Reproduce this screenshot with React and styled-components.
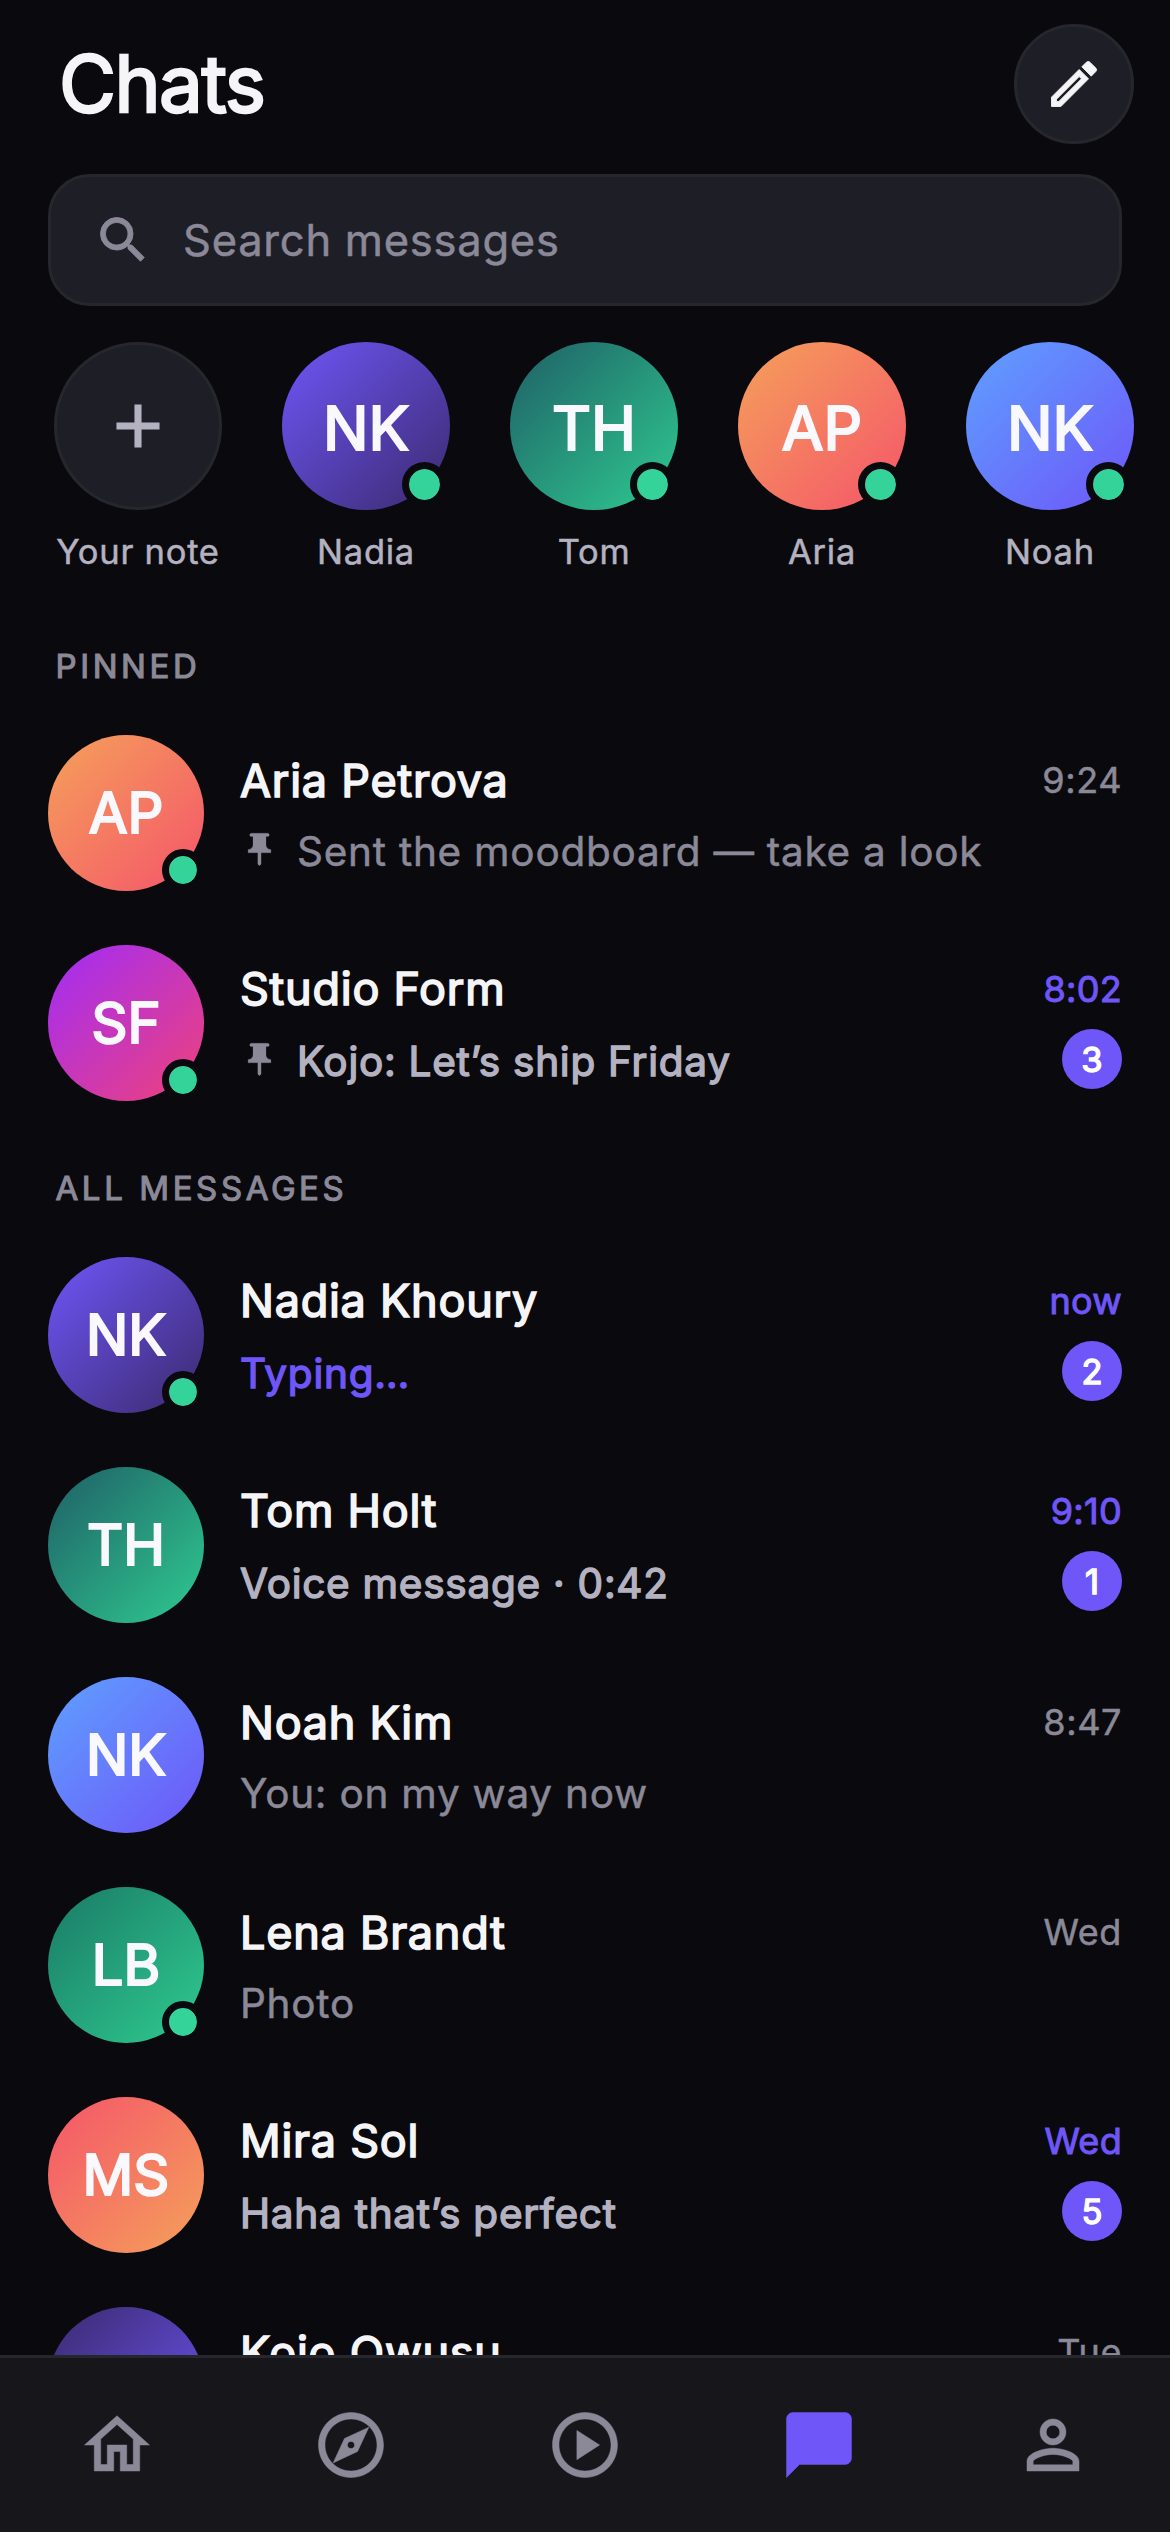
import React from 'react';
import styled, { createGlobalStyle } from 'styled-components';
import {
  MdAdd,
  MdChatBubble,
  MdOutlineEdit,
  MdOutlineExplore,
  MdOutlineHome,
  MdOutlinePlayCircle,
  MdPersonOutline,
  MdPushPin,
  MdSearch,
} from 'react-icons/md';

const COLORS = {
  background: '#0a0a0e',
  surface: '#1e1e26',
  nav: '#16161b',
  border: '#26262d',
  text: '#f5f5f8',
  soft: '#b4b2c0',
  muted: '#8b8998',
  accent: '#6e56f8',
  online: '#34d399',
};

const GRADIENTS = {
  violet: ['#6e56f8', '#3b2a6e'],
  teal: ['#1f5f66', '#2fcb90'],
  sunset: ['#f5a05a', '#f4556a'],
  sky: ['#5ea0ff', '#6e56f8'],
  magenta: ['#a02cf8', '#f0427a'],
  green: ['#1a7a66', '#2fcb90'],
  coral: ['#f4556a', '#f5a05a'],
  dusk: ['#3b2a6e', '#6e56f8'],
};

const GlobalStyle = createGlobalStyle`
  * {
    box-sizing: border-box;
  }

  body {
    margin: 0;
    background: ${COLORS.background};
    color: ${COLORS.text};
    font-family: Inter, 'Liberation Sans', sans-serif;
    font-weight: 400;
    -webkit-text-stroke: 0.5px currentColor;
  }

  /* the icons carry an empty 24x24 box that must not be outlined */
  svg path[fill='none'] {
    stroke: none;
  }
`;

const Screen = styled.div`
  display: flex;
  flex-direction: column;
  width: 1170px;
  height: 2532px;
  overflow: hidden;
`;

const Content = styled.main`
  flex: 1;
  min-height: 0;
  overflow: hidden;
`;

const Header = styled.header`
  display: flex;
  align-items: center;
  justify-content: space-between;
  padding: 24px 36px 0 59px;
`;

const Title = styled.h1`
  margin: 0;
  font-size: 78px;
  line-height: 120px;
  font-weight: 400;
  letter-spacing: -1.5px;
  -webkit-text-stroke-width: 2.4px;
`;

const RoundButton = styled.button`
  display: flex;
  align-items: center;
  justify-content: center;
  width: ${(props) => props.$size}px;
  height: ${(props) => props.$size}px;
  padding: 0;
  border: 3px solid ${COLORS.border};
  border-radius: 50%;
  background: ${COLORS.surface};
  color: ${(props) => props.$color};

  svg {
    stroke-width: 0.36px;
  }
`;

const SearchBar = styled.div`
  display: flex;
  align-items: center;
  gap: 30px;
  height: 132px;
  margin: 30px 48px 0;
  padding: 0 42px;
  border: 3px solid ${COLORS.border};
  border-radius: 42px;
  background: ${COLORS.surface};
  color: ${COLORS.muted};
  font-size: 43.5px;
  letter-spacing: 0.75px;

  svg {
    stroke-width: 0.36px;
  }
`;

const Stories = styled.div`
  display: flex;
  gap: 24px;
  padding: 36px 36px 0;
`;

const Story = styled.div`
  display: flex;
  flex-direction: column;
  align-items: center;
  flex: none;
  gap: 18px;
  width: 204px;
`;

const StoryName = styled.span`
  color: ${COLORS.soft};
  font-size: 34.5px;
  line-height: 48px;
  letter-spacing: 0.75px;
  white-space: nowrap;
`;

const AvatarCircle = styled.div`
  position: relative;
  display: flex;
  align-items: center;
  justify-content: center;
  flex: none;
  width: ${(props) => props.$size}px;
  height: ${(props) => props.$size}px;
  padding-top: ${(props) => (props.$size > 156 ? 4 : 0)}px;
  border-radius: 50%;
  background: linear-gradient(
    135deg,
    ${(props) => GRADIENTS[props.$tone][0]},
    ${(props) => GRADIENTS[props.$tone][1]}
  );
  color: #f9f8fd;
  font-size: ${(props) => props.$size * 0.36}px;
  -webkit-text-stroke-width: 2.2px;
`;

const OnlineDot = styled.span`
  position: absolute;
  right: ${(props) => props.$inset}px;
  bottom: ${(props) => props.$inset}px;
  width: ${(props) => props.$size}px;
  height: ${(props) => props.$size}px;
  border: 7.5px solid ${COLORS.background};
  border-radius: 50%;
  background: ${COLORS.online};
  background-clip: padding-box;
`;

const SectionLabel = styled.h2`
  margin: ${(props) => props.$top}px 0 0 55.5px;
  color: ${COLORS.muted};
  font-size: 33px;
  line-height: 48px;
  font-weight: 400;
  letter-spacing: 3.6px;
  -webkit-text-stroke-width: 1.1px;
`;

const ChatList = styled.div`
  display: flex;
  flex-direction: column;
  gap: 54px;
  padding: 45px 48px 0;
`;

const ChatRow = styled.div`
  display: flex;
  align-items: center;
  gap: 36px;
  height: 156px;
`;

const ChatBody = styled.div`
  display: flex;
  flex-direction: column;
  flex: 1;
  gap: 8.5px;
  min-width: 0;
`;

const Line = styled.div`
  display: flex;
  align-items: center;
  justify-content: space-between;
`;

const Name = styled.span`
  font-size: 45px;
  line-height: 67.5px;
  letter-spacing: 0.75px;
  -webkit-text-stroke-width: 1.6px;
`;

const Time = styled.span`
  color: ${(props) => (props.$active ? COLORS.accent : COLORS.muted)};
  font-size: 36px;
  line-height: 48px;
  letter-spacing: ${(props) => (props.$active ? 0.3 : 0.6)}px;
  -webkit-text-stroke-width: ${(props) => (props.$active ? 1 : 0.5)}px;
`;

const previewColor = (state) =>
  ({ typing: COLORS.accent, unread: COLORS.soft })[state] || COLORS.muted;

const Preview = styled.span`
  display: flex;
  align-items: center;
  gap: 18px;
  color: ${(props) => previewColor(props.$state)};
  font-size: 40.5px;
  line-height: 57px;
  letter-spacing: 0.75px;
  white-space: nowrap;
  -webkit-text-stroke-width: ${(props) => (props.$state === 'read' ? 0.5 : 1.4)}px;

  svg {
    margin: -2px 0 2px;
    color: ${COLORS.muted};
    stroke-width: 0.15px;
  }
`;

const Badge = styled.span`
  display: flex;
  align-items: center;
  justify-content: center;
  width: 60px;
  height: 60px;
  margin: -2px 0 2px;
  border-radius: 30px;
  background: ${COLORS.accent};
  color: #fff;
  font-size: 34.5px;
  -webkit-text-stroke-width: 1.4px;
`;

const BottomNav = styled.nav`
  display: flex;
  flex: none;
  height: 177px;
  border-top: 3px solid ${COLORS.border};
  background: ${COLORS.nav};
`;

const NavItem = styled.a`
  display: flex;
  align-items: center;
  justify-content: center;
  flex: 1;
  color: ${(props) => (props.$active ? COLORS.accent : COLORS.muted)};

  svg {
    stroke-width: 0.15px;
  }
`;

const stories = [
  { name: 'Nadia', initials: 'NK', tone: 'violet' },
  { name: 'Tom', initials: 'TH', tone: 'teal' },
  { name: 'Aria', initials: 'AP', tone: 'sunset' },
  { name: 'Noah', initials: 'NK', tone: 'sky' },
];

const pinned = [
  {
    name: 'Aria Petrova',
    initials: 'AP',
    tone: 'sunset',
    online: true,
    text: 'Sent the moodboard — take a look',
    time: '9:24',
  },
  {
    name: 'Studio Form',
    initials: 'SF',
    tone: 'magenta',
    online: true,
    text: 'Kojo: Let’s ship Friday',
    time: '8:02',
    unread: 3,
  },
];

const messages = [
  {
    name: 'Nadia Khoury',
    initials: 'NK',
    tone: 'violet',
    online: true,
    typing: true,
    text: 'Typing…',
    time: 'now',
    unread: 2,
  },
  {
    name: 'Tom Holt',
    initials: 'TH',
    tone: 'teal',
    text: 'Voice message · 0:42',
    time: '9:10',
    unread: 1,
  },
  {
    name: 'Noah Kim',
    initials: 'NK',
    tone: 'sky',
    text: 'You: on my way now',
    time: '8:47',
  },
  {
    name: 'Lena Brandt',
    initials: 'LB',
    tone: 'green',
    online: true,
    text: 'Photo',
    time: 'Wed',
  },
  {
    name: 'Mira Sol',
    initials: 'MS',
    tone: 'coral',
    text: 'Haha that’s perfect',
    time: 'Wed',
    unread: 5,
  },
  {
    name: 'Kojo Owusu',
    tone: 'dusk',
    time: 'Tue',
  },
];

const tabs = [
  { key: 'home', Icon: MdOutlineHome },
  { key: 'explore', Icon: MdOutlineExplore },
  { key: 'play', Icon: MdOutlinePlayCircle },
  { key: 'chats', Icon: MdChatBubble, active: true },
  { key: 'profile', Icon: MdPersonOutline },
];

const Avatar = ({ initials, tone, online, size = 156 }) => (
  <AvatarCircle $size={size} $tone={tone}>
    {initials}
    {online && (
      <OnlineDot $size={size > 156 ? 45 : 42} $inset={size > 156 ? 3 : 0} />
    )}
  </AvatarCircle>
);

const getState = ({ typing, unread }) => {
  if (typing) return 'typing';
  return unread ? 'unread' : 'read';
};

const Chat = ({ chat, isPinned }) => (
  <ChatRow>
    <Avatar initials={chat.initials} tone={chat.tone} online={chat.online} />
    <ChatBody>
      <Line>
        <Name>{chat.name}</Name>
        <Time $active={!!chat.unread}>{chat.time}</Time>
      </Line>
      <Line>
        <Preview $state={getState(chat)}>
          {isPinned && <MdPushPin size={39} />}
          {chat.text || '\u00a0'}
        </Preview>
        {chat.unread && <Badge>{chat.unread}</Badge>}
      </Line>
    </ChatBody>
  </ChatRow>
);

const App = () => {
  return (
    <>
      <GlobalStyle />
      <Screen>
        <Content>
          <Header>
            <Title>Chats</Title>
            <RoundButton $size={120} $color={COLORS.text} aria-label="New chat">
              <MdOutlineEdit size={60} />
            </RoundButton>
          </Header>
          <SearchBar>
            <MdSearch size={60} />
            <span>Search messages</span>
          </SearchBar>
          <Stories>
            <Story>
              <RoundButton $size={168} $color={COLORS.soft} aria-label="Add note">
                <MdAdd size={72} />
              </RoundButton>
              <StoryName>Your note</StoryName>
            </Story>
            {stories.map((story) => (
              <Story key={story.name}>
                <Avatar
                  initials={story.initials}
                  tone={story.tone}
                  size={168}
                  online
                />
                <StoryName>{story.name}</StoryName>
              </Story>
            ))}
          </Stories>
          <SectionLabel $top={66}>PINNED</SectionLabel>
          <ChatList>
            {pinned.map((chat) => (
              <Chat key={chat.name} chat={chat} isPinned />
            ))}
          </ChatList>
          <SectionLabel $top={63}>ALL MESSAGES</SectionLabel>
          <ChatList>
            {messages.map((chat) => (
              <Chat key={chat.name} chat={chat} />
            ))}
          </ChatList>
        </Content>
        <BottomNav>
          {tabs.map(({ key, Icon, active }) => (
            <NavItem key={key} $active={active}>
              <Icon size={78} />
            </NavItem>
          ))}
        </BottomNav>
      </Screen>
    </>
  );
};

export default App;
